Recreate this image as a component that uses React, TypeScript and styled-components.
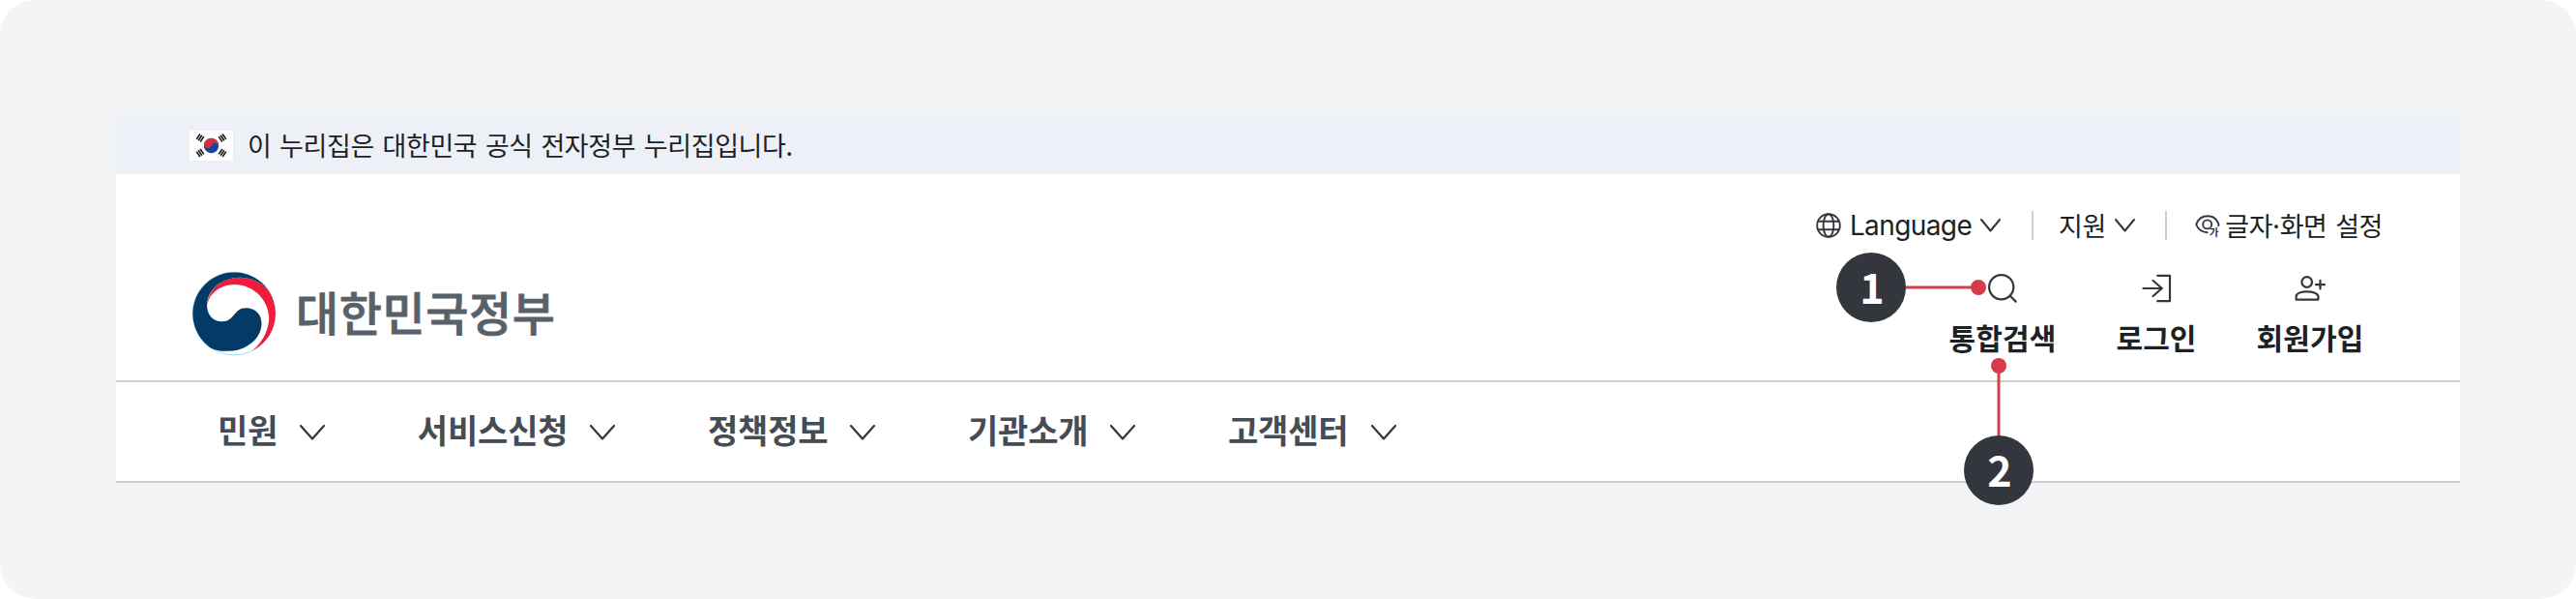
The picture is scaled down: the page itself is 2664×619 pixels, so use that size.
import React from 'react';
import styled, { createGlobalStyle } from 'styled-components';

const GlobalStyle = createGlobalStyle`
  * { box-sizing: border-box; }
  body {
    margin: 0;
    background: #fff;
    font-family: 'Noto Sans CJK KR', 'Noto Sans', sans-serif;
    color: #1e2124;
  }
  svg { display: block; flex: none; }
`;

const Stage = styled.div`
  position: relative;
  width: 2664px;
  height: 619px;
  padding: 120px;
  background: #f3f4f6;
  border-radius: 36px;
  overflow: hidden;
`;

const Panel = styled.div`
  display: flex;
  flex-direction: column;
  height: 379px;
  background: #fff;
`;

const Banner = styled.div`
  display: flex;
  align-items: center;
  gap: 15px;
  height: 60px;
  padding-left: 76px;
  background: #edf0f6;
`;

const BannerText = styled.span`
  font-size: 27px;
  line-height: 40px;
  letter-spacing: -0.4px;
  word-spacing: 3px;
  white-space: nowrap;
`;

const HeaderMain = styled.header`
  display: flex;
  justify-content: space-between;
  height: 215px;
  padding: 33px 80px 0 78px;
  border-bottom: 2px solid #cdd1d5;
`;

const Brand = styled.div`
  display: flex;
  align-items: center;
  gap: 20px;
  height: 88px;
  margin-top: 67px;
`;

const BrandName = styled.span`
  padding-bottom: 6px;
  font-size: 48px;
  font-weight: 500;
  line-height: 60px;
  letter-spacing: 0.6px;
  color: #58616a;
  -webkit-text-stroke: 0.8px #58616a;
  white-space: nowrap;
`;

const Tools = styled.div`
  display: flex;
  flex-direction: column;
  align-items: flex-end;
`;

const UtilityRow = styled.div`
  display: flex;
  align-items: center;
  height: 40px;
`;

const Utility = styled.div<{ $width: number }>`
  display: flex;
  align-items: center;
  justify-content: space-between;
  width: ${(p) => p.$width}px;
`;

const UtilityText = styled.span<{ $latin?: boolean }>`
  font-family: ${(p) => (p.$latin ? "Inter, 'Noto Sans CJK KR', sans-serif" : 'inherit')};
  font-size: ${(p) => (p.$latin ? 28 : 27)}px;
  letter-spacing: ${(p) => (p.$latin ? -0.6 : -0.42)}px;
  word-spacing: 3px;
  line-height: 40px;
  white-space: nowrap;
`;

const MiddleDot = styled.span`
  display: inline-flex;
  justify-content: center;
  width: 7.5px;
`;

const Divider = styled.span<{ $before: number; $after: number }>`
  width: 2px;
  height: 30px;
  margin: 0 ${(p) => p.$after}px 0 ${(p) => p.$before}px;
  background: #cdd1d5;
`;

const Actions = styled.div`
  display: flex;
  gap: 60px;
  margin: 29px 19px 0 0;
`;

const Action = styled.div<{ $width: number }>`
  display: flex;
  flex-direction: column;
  align-items: center;
  gap: 14px;
  width: ${(p) => p.$width}px;
`;

const ActionLabel = styled.span`
  font-size: 30px;
  font-weight: 700;
  line-height: 40px;
  letter-spacing: 0.1px;
  white-space: nowrap;
`;

const Nav = styled.nav`
  display: flex;
  align-items: center;
  gap: 95.5px;
  height: 104px;
  padding: 2px 0 0 105px;
  border-bottom: 2px solid #cdd1d5;
`;

const NavItem = styled.div`
  display: flex;
  align-items: center;
  gap: 23px;
`;

const NavText = styled.span`
  padding-bottom: 6px;
  font-size: 34px;
  font-weight: 700;
  line-height: 48px;
  letter-spacing: -0.15px;
  color: #464c53;
  white-space: nowrap;
`;

const Marker = styled.div<{ $x: number; $y: number }>`
  position: absolute;
  left: ${(p) => p.$x - 36}px;
  top: ${(p) => p.$y - 36}px;
  display: flex;
  align-items: center;
  justify-content: center;
  width: 72px;
  height: 72px;
  padding: 0 0 5px 2px;
  border-radius: 50%;
  background: #33363d;
  color: #fff;
  font-size: 43px;
  font-weight: 700;
  line-height: 60px;
`;

const Leader = styled.svg<{ $x: number; $y: number }>`
  position: absolute;
  left: ${(p) => p.$x}px;
  top: ${(p) => p.$y}px;
`;

const Chevron = ({ w, h, s = 2 }: { w: number; h: number; s?: number }) => (
  <svg width={w} height={h} fill="none" stroke="#33363d" strokeWidth={s} strokeLinecap="round" strokeLinejoin="round">
    <path d={`M1 1L${w / 2} ${h - 1.5}L${w - 1} 1`} />
  </svg>
);

const FlagBars = ({ x, y, angle }: { x: number; y: number; angle: number }) => (
  <g transform={`translate(${x} ${y}) rotate(${angle})`} stroke="#222" strokeWidth="1.7">
    <path d="M-3.3 -2.4H3.3M-3.3 0H3.3M-3.3 2.4H3.3" />
  </g>
);

const Flag = () => (
  <svg width="45" height="31" viewBox="0 0 45 31">
    <rect width="45" height="31" fill="#fff" />
    <g transform="rotate(20 22.5 15.5)">
      <circle cx="22.5" cy="15.5" r="7.7" fill="#0f47a1" />
      <path d="M14.8 15.5a7.7 7.7 0 0 1 15.4 0a3.85 3.85 0 0 0-7.7 0a3.85 3.85 0 0 1-7.7 0Z" fill="#d22f3f" />
    </g>
    <FlagBars x={11} y={7.5} angle={-56} />
    <FlagBars x={34} y={7.5} angle={56} />
    <FlagBars x={11} y={23} angle={56} />
    <FlagBars x={34} y={23} angle={-56} />
  </svg>
);

const Emblem = () => (
  <svg width="88" height="88" viewBox="52.5 60 264 264">
    <circle cx="184.5" cy="192" r="128.5" fill="#fff" stroke="#6fd0f5" strokeWidth="2" />
    <path
      d="M242 307C280 275 293 235 293 205C291 145 240 102 187 102C140 103 106 130 101 170C103 116 148 80 202 80C237 80 268 95 289 117A128.5 128.5 0 0 1 242 307Z"
      fill="#ef1c3c"
    />
    <path
      d="M113 299A128.5 128.5 0 1 1 289 117C268 95 237 80 202 80C148 80 98 118 101 172C103 199 122 217 147 217C188 217 182 175 222 175C250 175 270 195 270 223C270 270 224 308 165 308C148 309 130 307 113 299Z"
      fill="#033a66"
    />
  </svg>
);

const GlobeIcon = () => (
  <svg width="26" height="26" viewBox="0 0 26 26" fill="none" stroke="#33363d" strokeWidth="1.9">
    <circle cx="13" cy="13" r="11.8" />
    <ellipse cx="13" cy="13" rx="5.4" ry="11.8" />
    <path d="M2.3 8.7h21.4M2.3 17.3h21.4" />
  </svg>
);

const EyeIcon = () => (
  <svg width="26" height="26" viewBox="0 0 26 26" fill="none" stroke="#33363d" strokeWidth="1.9" strokeLinecap="round">
    <path d="M12.8 20.2C7.2 20 3 16.4 1.2 12C3.2 6.6 7.7 3.2 12.9 3.2C18.2 3.2 22.7 6.6 24.6 12L24.2 13.2" />
    <circle cx="12.7" cy="11.9" r="4.5" />
    <text
      x="14.8"
      y="24"
      fontSize="10.5"
      fontWeight="700"
      fontFamily="'Noto Sans CJK KR', sans-serif"
      fill="#33363d"
      stroke="none"
    >
      가
    </text>
  </svg>
);

const SearchIcon = () => (
  <svg width="32" height="32" viewBox="0 0 32 32" fill="none" stroke="#33363d" strokeWidth="2.2" strokeLinecap="round">
    <circle cx="14.7" cy="14.7" r="12.6" />
    <path d="M23.8 23.8L29.6 29.6" />
  </svg>
);

const LoginIcon = () => (
  <svg width="32" height="32" viewBox="0 0 32 32" fill="none" stroke="#33363d" strokeWidth="2.2" strokeLinecap="round" strokeLinejoin="round">
    <path d="M17.3 2.8H30V29.2H17.3" />
    <path d="M2.5 16H21.6M12.6 8L21.8 16L12.6 24" />
  </svg>
);

const JoinIcon = () => (
  <svg width="32" height="32" viewBox="0 0 32 32" fill="none" stroke="#33363d" strokeWidth="2.2" strokeLinecap="round" strokeLinejoin="round">
    <circle cx="12.7" cy="9.5" r="5.3" />
    <path d="M1.6 27.6V24.5C1.6 21.3 6.4 19.4 12.8 19.4S24.4 21.3 24.4 24.5V27.6Z" />
    <path d="M26.5 7.9V16.5M22 12.2H31" />
  </svg>
);

const navItems = ['민원', '서비스신청', '정책정보', '기관소개', '고객센터'];

const actions = [
  { label: '통합검색', width: 112, icon: <SearchIcon /> },
  { label: '로그인', width: 86, icon: <LoginIcon /> },
  { label: '회원가입', width: 112, icon: <JoinIcon /> },
];

export default function App() {
  return (
    <>
      <GlobalStyle />
      <Stage>
        <Panel>
          <Banner>
            <Flag />
            <BannerText>이 누리집은 대한민국 공식 전자정부 누리집입니다.</BannerText>
          </Banner>
          <HeaderMain>
            <Brand>
              <Emblem />
              <BrandName>대한민국정부</BrandName>
            </Brand>
            <Tools>
              <UtilityRow>
                <Utility $width={191}>
                  <GlobeIcon />
                  <UtilityText $latin>Language</UtilityText>
                  <Chevron w={21} h={14} />
                </Utility>
                <Divider $before={32} $after={26} />
                <Utility $width={79}>
                  <UtilityText>지원</UtilityText>
                  <Chevron w={21} h={14} />
                </Utility>
                <Divider $before={31} $after={29} />
                <Utility $width={194}>
                  <EyeIcon />
                  <UtilityText>
                    글자<MiddleDot>·</MiddleDot>화면 설정
                  </UtilityText>
                </Utility>
              </UtilityRow>
              <Actions>
                {actions.map((a) => (
                  <Action key={a.label} $width={a.width}>
                    {a.icon}
                    <ActionLabel>{a.label}</ActionLabel>
                  </Action>
                ))}
              </Actions>
            </Tools>
          </HeaderMain>
          <Nav>
            {navItems.map((label) => (
              <NavItem key={label}>
                <NavText>{label}</NavText>
                <Chevron w={26} h={16} s={2.2} />
              </NavItem>
            ))}
          </Nav>
        </Panel>
        <Leader $x={1970} $y={289} width="84" height="16">
          <path d="M0 8H76" stroke="#d63d4a" strokeWidth="3" />
          <circle cx="76" cy="8" r="8" fill="#d63d4a" />
        </Leader>
        <Leader $x={2059} $y={370} width="16" height="82">
          <path d="M8 8V82" stroke="#d63d4a" strokeWidth="3" />
          <circle cx="8" cy="8" r="8" fill="#d63d4a" />
        </Leader>
        <Marker $x={1935} $y={297}>1</Marker>
        <Marker $x={2067} $y={486}>2</Marker>
      </Stage>
    </>
  );
}
